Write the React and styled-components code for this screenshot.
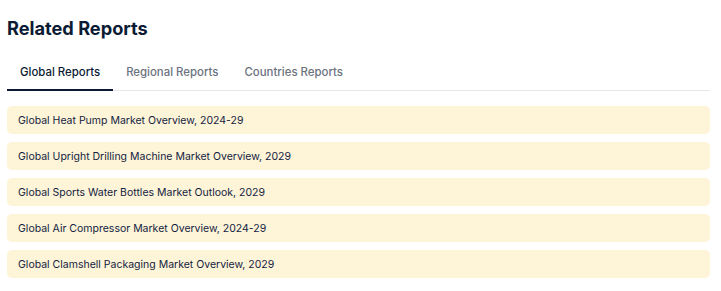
import React, { useState } from "react";
import styled, { createGlobalStyle } from "styled-components";

const Global = createGlobalStyle`
  html, body { margin: 0; padding: 0; background: #fff; }
  body { font-family: Inter, "Noto Sans", sans-serif; }
`;

const Section = styled.section`
  width: 703px;
  padding: 16px 0 0 7px;
`;

const Title = styled.h2`
  margin: 0;
  font-size: 18.2px;
  line-height: 24px;
  font-weight: 700;
  color: #0b1b33;
`;

const Tabs = styled.div`
  display: flex;
  margin-top: 24px;
  border-bottom: 1px solid #e5e7eb;
`;

const Tab = styled.button`
  appearance: none;
  background: none;
  border: none;
  padding: 0 13px 9px;
  margin-bottom: -1px;
  font-family: inherit;
  font-size: 11.4px;
  line-height: 16px;
  font-weight: 500;
  color: ${(p) => (p.$active ? "#0b1b33" : "#6b7280")};
  border-bottom: 2px solid ${(p) => (p.$active ? "#0b1b33" : "transparent")};
  cursor: pointer;
`;

const List = styled.ul`
  list-style: none;
  margin: 15px 0 0;
  padding: 0;
  display: flex;
  flex-direction: column;
  gap: 8px;
`;

const Item = styled.li`
  background: #fef4d8;
  border-radius: 5px;
  height: 28px;
  display: flex;
  align-items: center;
  padding: 0 11px;
  font-size: 10.5px;
  color: #13233f;
`;

const tabs = ["Global Reports", "Regional Reports", "Countries Reports"];
const reports = [
  "Global Heat Pump Market Overview, 2024-29",
  "Global Upright Drilling Machine Market Overview, 2029",
  "Global Sports Water Bottles Market Outlook, 2029",
  "Global Air Compressor Market Overview, 2024-29",
  "Global Clamshell Packaging Market Overview, 2029",
];

export default function App() {
  const [active, setActive] = useState(0);
  return (
    <>
      <Global />
      <Section>
        <Title>Related Reports</Title>
        <Tabs>
          {tabs.map((t, i) => (
            <Tab key={t} $active={i === active} onClick={() => setActive(i)}>
              {t}
            </Tab>
          ))}
        </Tabs>
        <List>
          {reports.map((r) => (
            <Item key={r}>{r}</Item>
          ))}
        </List>
      </Section>
    </>
  );
}
